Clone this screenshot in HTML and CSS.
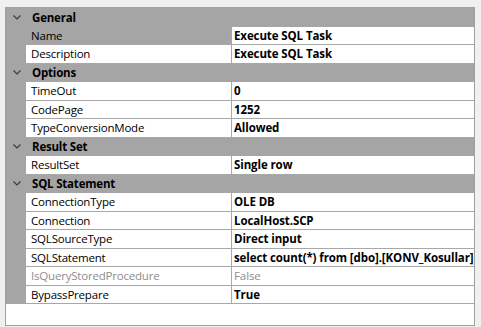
FILE: index.html
```html
<!DOCTYPE html>
<html lang="en">
<head>
  <meta charset="UTF-8">
  <title>Execute SQL Task Properties</title>
  <link rel="stylesheet" href="styles.css">
</head>

<body>
  <div class="grid">
    <div class="cat"><span class="chev"><svg width="8" height="5" viewBox="0 0 8 5"><path d="M0.5 0.5 L4 4 L7.5 0.5" fill="none" stroke="#3c3c3c" stroke-width="1.2"/></svg></span>General</div>
    <div class="row selected"><span class="gutter"></span><span class="label">Name</span><span class="value">Execute SQL Task</span></div>
    <div class="row"><span class="gutter"></span><span class="label">Description</span><span class="value">Execute SQL Task</span></div>

    <div class="cat"><span class="chev"><svg width="8" height="5" viewBox="0 0 8 5"><path d="M0.5 0.5 L4 4 L7.5 0.5" fill="none" stroke="#3c3c3c" stroke-width="1.2"/></svg></span>Options</div>
    <div class="row"><span class="gutter"></span><span class="label">TimeOut</span><span class="value">0</span></div>
    <div class="row"><span class="gutter"></span><span class="label">CodePage</span><span class="value">1252</span></div>
    <div class="row"><span class="gutter"></span><span class="label">TypeConversionMode</span><span class="value">Allowed</span></div>

    <div class="cat"><span class="chev"><svg width="8" height="5" viewBox="0 0 8 5"><path d="M0.5 0.5 L4 4 L7.5 0.5" fill="none" stroke="#3c3c3c" stroke-width="1.2"/></svg></span>Result Set</div>
    <div class="row"><span class="gutter"></span><span class="label">ResultSet</span><span class="value">Single row</span></div>

    <div class="cat"><span class="chev"><svg width="8" height="5" viewBox="0 0 8 5"><path d="M0.5 0.5 L4 4 L7.5 0.5" fill="none" stroke="#3c3c3c" stroke-width="1.2"/></svg></span>SQL Statement</div>
    <div class="row"><span class="gutter"></span><span class="label">ConnectionType</span><span class="value">OLE DB</span></div>
    <div class="row"><span class="gutter"></span><span class="label">Connection</span><span class="value">LocalHost.SCP</span></div>
    <div class="row"><span class="gutter"></span><span class="label">SQLSourceType</span><span class="value">Direct input</span></div>
    <div class="row"><span class="gutter"></span><span class="label">SQLStatement</span><span class="value">select count(*) from [dbo].[KONV_Kosullar]</span></div>
    <div class="row disabled"><span class="gutter"></span><span class="label">IsQueryStoredProcedure</span><span class="value">False</span></div>
    <div class="row"><span class="gutter"></span><span class="label">BypassPrepare</span><span class="value">True</span></div>
  </div>
</body>
</html>
```

FILE: styles.css
```css
body {
  margin: 0;
  padding: 7px 0 0 5px;
  background: #f0f0f0;
  font-family: 'Open Sans', sans-serif;
  font-size: 11.5px;
  letter-spacing: -0.2px;
  color: #000;
}

.grid {
  width: 468px;
  height: 317px;
  background: #ffffff;
  border: 1px solid #a0a0a0;
  overflow: hidden;
}

.cat {
  display: flex;
  align-items: center;
  height: 18.5px;
  background: #a5a5a5;
  font-weight: 700;
}

.chev {
  width: 20px;
  display: flex;
  justify-content: center;
  margin-right: 5px;
  padding-left: 1px;
}

.row {
  display: grid;
  grid-template-columns: 20px 206px 242px;
  height: 18.5px;
}

.gutter {
  background: #a5a5a5;
}

.label, .value {
  display: flex;
  align-items: center;
  border-bottom: 1px solid #a8a8a8;
  white-space: nowrap;
  overflow: hidden;
  box-sizing: border-box;
}

.label {
  padding-left: 5px;
  border-right: 1px solid #a8a8a8;
}

.value {
  padding-left: 2px;
  font-weight: 700;
  letter-spacing: -0.1px;
}

.selected .label {
  background: #a5a5a5;
}

.disabled .label,
.disabled .value {
  color: #8d8d8d;
  font-weight: 400;
}
```
